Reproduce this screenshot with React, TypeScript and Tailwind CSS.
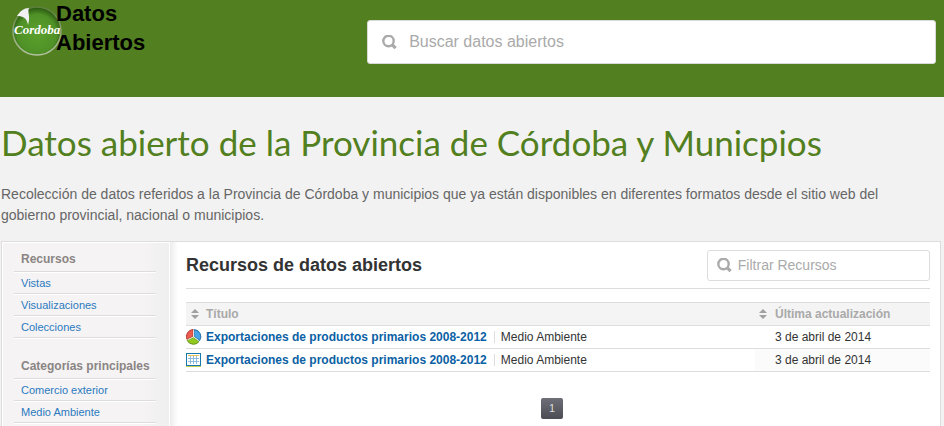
import type { ReactNode } from "react";

const resources = [
  { kind: "chart", title: "Exportaciones de productos primarios 2008-2012", category: "Medio Ambiente", updated: "3 de abril de 2014" },
  { kind: "table", title: "Exportaciones de productos primarios 2008-2012", category: "Medio Ambiente", updated: "3 de abril de 2014" },
];

const groups = [
  { heading: "Recursos", links: ["Vistas", "Visualizaciones", "Colecciones"] },
  { heading: "Categorías principales", links: ["Comercio exterior", "Medio Ambiente"] },
];

function SearchIcon() {
  return (
    <svg viewBox="0 0 15 15" className="size-[15px] shrink-0" fill="none" stroke="#aaaaaa" aria-hidden="true">
      <circle cx="6.5" cy="6" r="5.2" strokeWidth="2.4" />
      <path d="M9.8 9.3l3.8 3.8" strokeWidth="3.2" />
    </svg>
  );
}

function SortIcon() {
  return (
    <svg viewBox="0 0 8 10" className="h-[10px] w-2 shrink-0" fill="#a0a0a0" aria-hidden="true">
      <path d="M4 0l4 4H0zM0 6h8l-4 4z" />
    </svg>
  );
}

function ChartIcon() {
  return (
    <svg viewBox="0 0 16 16" className="size-4 shrink-0" aria-hidden="true">
      <circle cx="7.5" cy="7.7" r="7.5" fill="#f6f6ee" />
      <path d="M7.1 7.4V.6A7 7 0 0 0 1 10.4z" fill="#ee5a50" stroke="#a8352c" strokeWidth=".9" />
      <path d="M8.2 7.4V.6A7 7 0 0 1 13.6 11.6z" fill="#45a5e6" stroke="#2368a0" strokeWidth=".9" />
      <path d="M7.5 8.4L13 12.6A7.1 7.1 0 0 1 1.1 11.2z" fill="#91c91e" stroke="#5e8a16" strokeWidth=".9" />
      <path d="M7.6 1.2v6.6l5.1 4M7.6 7.8l-6 3" fill="none" stroke="#f7f7ef" strokeWidth=".9" />
    </svg>
  );
}

function TableIcon() {
  return (
    <svg viewBox="0 0 16 14" className="h-[14px] w-4 shrink-0" shapeRendering="crispEdges" aria-hidden="true">
      <path d="M0 0h15v13H0z" fill="#1679ae" />
      <path d="M1 1h13v11H1z" fill="#fff" />
      <path d="M2 2h11v1H2z" fill="#f0c058" />
      <path d="M2 5h11v1H2zM2 8h11v1H2zM4 3h1v8H4zM7 3h1v8H7zM10 3h1v8h-1z" fill="#8ebbdc" />
      <path d="M0 13h15v1H0z" fill="#c5cf58" />
    </svg>
  );
}

function Logo() {
  return (
    <svg viewBox="0 0 52 52" className="size-[52px] shrink-0" aria-hidden="true">
      <defs>
        <radialGradient id="orb" cx="50%" cy="56%" r="54%">
          <stop offset="0" stopColor="#5ba02d" />
          <stop offset=".75" stopColor="#4f9126" />
          <stop offset="1" stopColor="#2c5c12" />
        </radialGradient>
        <linearGradient id="rim" x1="0" y1="0" x2="0" y2="1">
          <stop offset="0" stopColor="#5d7f3c" />
          <stop offset="1" stopColor="#b3c3a0" />
        </linearGradient>
      </defs>
      <circle cx="26" cy="26" r="24" fill="url(#orb)" stroke="url(#rim)" strokeWidth="1.6" />
      <path d="M6 11C9 6 13 3 18 3C16 7 20 11 17 20C16 13 12 11 6 11z" fill="#f1f1f1" />
      <text x="3" y="29" fontSize="13" fontWeight="700" fontStyle="italic" fill="#fff" fontFamily="'Liberation Serif', serif">
        Cordoba
      </text>
    </svg>
  );
}

function SideRow({ children }: { children: ReactNode }) {
  return <div className="border-b border-white"><div className="border-b border-[#dddddd] px-[7px]">{children}</div></div>;
}

export default function App() {
  return (
    <div className="flex min-h-screen flex-col bg-[#f2f2f2] font-['Liberation_Sans',Arial,sans-serif] text-[#333333]">
      <header className="flex h-[97px] items-start justify-between bg-[#527f20] pr-2 pl-[11px]">
        <a href="#inicio" className="flex items-start text-[22px] leading-[29px] font-bold text-black">
          <span className="mt-[5px]"><Logo /></span>
          <span className="-mt-px -ml-[7px] w-24">Datos Abiertos</span>
        </a>
        <label className="mt-5 flex h-11 w-[61.5%] items-center gap-3 rounded-[3px] border border-[#d9d9d9] bg-white px-3.5">
          <SearchIcon />
          <input type="search" aria-label="Buscar datos abiertos" placeholder="Buscar datos abiertos" className="min-w-0 flex-1 text-base outline-none placeholder:text-[#aaaaaa]" />
        </label>
      </header>

      <div className="px-px pt-[23px] pb-[15px]">
        <h1 className="font-['Lato',sans-serif] text-[35px] leading-[44px] text-[#527f20]">
          Datos abierto de la Provincia de Córdoba y Municpios
        </h1>
        <p className="mt-5 max-w-[920px] text-[14px] leading-[21px] text-[#666666]">
          Recolección de datos referidos a la Provincia de Córdoba y municipios que ya están disponibles en diferentes formatos desde el sitio web del gobierno provincial, nacional o municipios.
        </p>
      </div>

      <div className="mr-[3px] ml-px flex flex-1 border border-b-0 border-[#dddddd] bg-white">
        <nav aria-label="Recursos y categorías" className="mt-px ml-px w-[166px] shrink-0 bg-linear-to-r from-[#f5f3f4] from-85% to-[#efefef] pt-[5px] pr-[13px] pl-[11px]">
          {groups.map((group) => (
            <section key={group.heading} className="mb-4 last:mb-0">
              <SideRow>
                <h2 className="pb-px text-[12px] leading-[22px] font-bold whitespace-nowrap text-[#8a8583]">{group.heading}</h2>
              </SideRow>
              <ul>
                {group.links.map((link) => (
                  <li key={link}>
                    <SideRow>
                      <a href="#recursos" className="block text-[11px] leading-5 text-[#2a7abf]">{link}</a>
                    </SideRow>
                  </li>
                ))}
              </ul>
            </section>
          ))}
        </nav>
        <div className="ml-px w-2 shrink-0 bg-linear-to-r from-[#ececec] to-white" />

        <main className="min-w-0 flex-1 pt-2 pr-2.5 pl-2">
          <div className="flex items-start justify-between border-b border-[#dddddd] pb-[7px]">
            <h2 className="text-[18px] leading-[30px] font-bold">Recursos de datos abiertos</h2>
            <label className="flex h-[31px] w-[30%] items-center gap-1.5 rounded-[3px] border border-[#dddddd] px-[9px]">
              <SearchIcon />
              <input type="search" aria-label="Filtrar Recursos" placeholder="Filtrar Recursos" className="min-w-0 flex-1 text-[14px] outline-none placeholder:text-[#aaaaaa]" />
            </label>
          </div>

          <table className="mt-[13px] w-full border-separate border-spacing-0 border-t border-[#dddddd] text-left text-[12px] leading-[22px]">
            <thead className="bg-[#f4f4f4] text-[#a9a9a9]">
              <tr>
                <th className="border-b border-[#dddddd] p-0">
                  <button type="button" className="flex items-center gap-[7px] pl-[5px] font-bold"><SortIcon />Título</button>
                </th>
                <th className="w-[175px] border-b border-[#dddddd] p-0">
                  <button type="button" className="flex items-center gap-2 pl-1 font-bold"><SortIcon />Última actualización</button>
                </th>
              </tr>
            </thead>
            <tbody>
              {resources.map((item) => (
                <tr key={item.kind} className="group">
                  <td className="border-b border-[#dddddd] p-0">
                    <div className="flex items-center">
                      {item.kind === "chart" ? <ChartIcon /> : <TableIcon />}
                      <a href="#recurso" className="ml-1 font-bold text-[#0b61a4]">{item.title}</a>
                      <span className="ml-[7px] border-l border-[#dddddd] pl-1.5 leading-3">{item.category}</span>
                    </div>
                  </td>
                  <td className="border-b border-[#dddddd] p-0 pl-5 group-even:bg-[#fbfbfb]">{item.updated}</td>
                </tr>
              ))}
            </tbody>
          </table>

          <div className="mt-[26px] mr-3 flex justify-center">
            <button type="button" className="h-[21px] w-[22px] rounded-xs bg-linear-to-b from-[#6d6e77] to-[#4c4d54] text-[11px] leading-[21px] text-[#dddddd]">1</button>
          </div>
        </main>
      </div>
    </div>
  );
}
